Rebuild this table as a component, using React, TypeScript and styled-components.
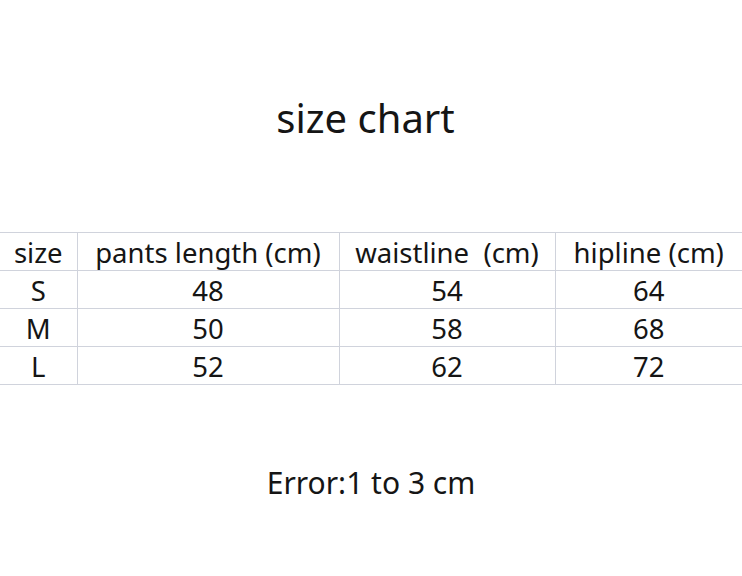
import React from "react";
import styled, { createGlobalStyle } from "styled-components";

const Global = createGlobalStyle`
  html, body { margin: 0; padding: 0; background: #fff; }
  body { font-family: "Noto Sans", "Noto Sans CJK SC", sans-serif; color: #151515; }
`;

const Page = styled.div`
  width: 742px;
  height: 576px;
  display: flex;
  flex-direction: column;
  align-items: center;
  overflow: hidden;
`;

const Title = styled.h1`
  margin: 90px 0 0 -11px;
  font-size: 40px;
  font-weight: 400;
  line-height: 56px;
`;

const Table = styled.table`
  margin-top: 86px;
  width: 742px;
  border-collapse: collapse;
  table-layout: fixed;
`;

const Cell = styled.td`
  height: 37px;
  padding: 2px 0 0;
  box-sizing: border-box;
  text-align: center;
  font-size: 27.5px;
  line-height: 35px;
  border-top: 1px solid #d0d3dc;
  border-bottom: 1px solid #d0d3dc;
  & + & { border-left: 1px solid #d0d3dc; }
`;

const Note = styled.p`
  margin: 78px 0 0;
  font-size: 30px;
  line-height: 40px;
`;

const cols = [77, 262, 216, 187];
const header = ["size", "pants length (cm)", "waistline\u00a0 (cm)", "hipline (cm)"];
const rows = [
  ["S", "48", "54", "64"],
  ["M", "50", "58", "68"],
  ["L", "52", "62", "72"],
];

export default function App() {
  return (
    <Page>
      <Global />
      <Title>size chart</Title>
      <Table>
        <colgroup>
          {cols.map((w, i) => (
            <col key={i} style={{ width: w }} />
          ))}
        </colgroup>
        <tbody>
          <tr>
            {header.map((h) => (
              <Cell key={h}>{h}</Cell>
            ))}
          </tr>
          {rows.map((r) => (
            <tr key={r[0]}>
              {r.map((c, i) => (
                <Cell key={i}>{c}</Cell>
              ))}
            </tr>
          ))}
        </tbody>
      </Table>
      <Note>Error:1 to 3 cm</Note>
    </Page>
  );
}
